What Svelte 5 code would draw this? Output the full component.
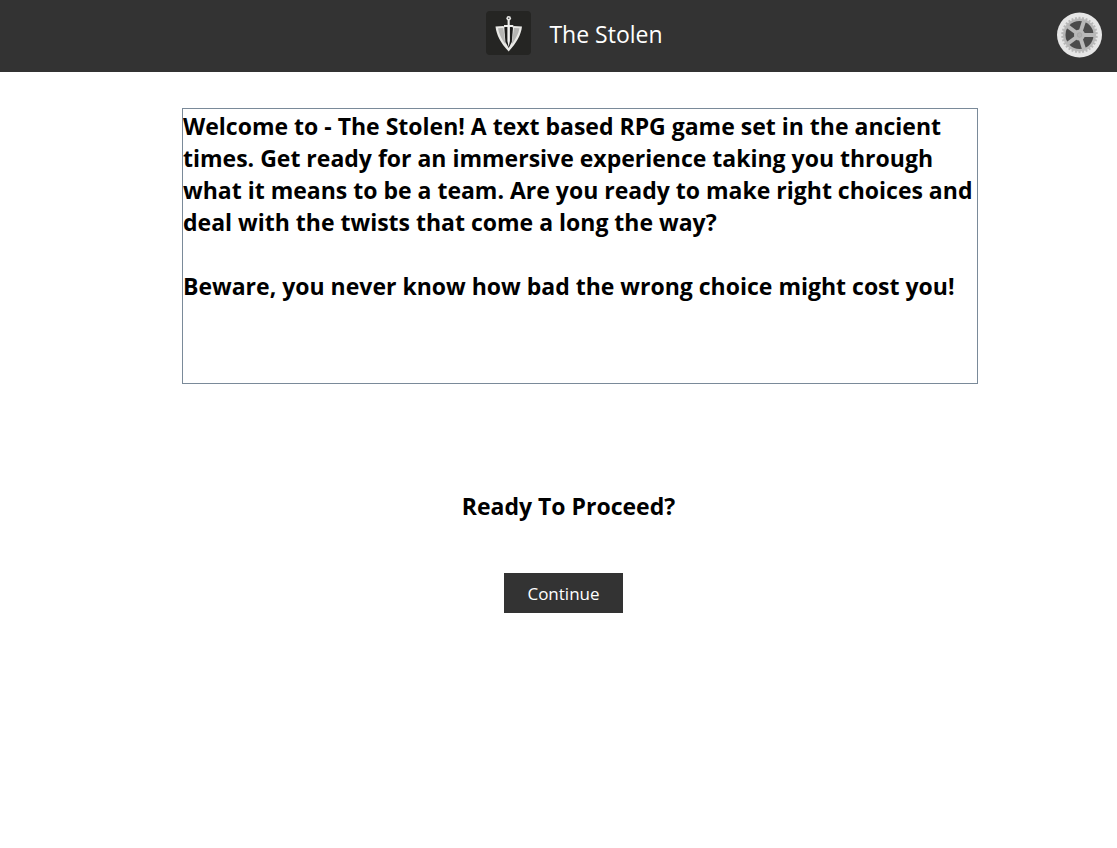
<script>
  const intro = `Welcome to - The Stolen! A text based RPG game set in the ancient times. Get ready for an immersive experience taking you through what it means to be a team. Are you ready to make right choices and deal with the twists that come a long the way?

Beware, you never know how bad the wrong choice might cost you!`;
  const teeth = Array.from({ length: 30 }, (_, i) => i * 12);
  const spokes = Array.from({ length: 5 }, (_, i) => i * 72);
</script>

<div class="page">
  <header>
    <div class="brand">
      <svg class="logo" viewBox="0 0 45 44" aria-hidden="true">
        <rect width="45" height="44" rx="4" fill="#252523" />
        <path d="M9.500 15.500L17.500 15L19 17H26L27.500 15L36 15.500C35 24 30.500 32 22.700 40.500C14.500 32 10.500 24 9.500 15.500Z" fill="#e9e9e6" />
        <path d="M12 17.300L17.300 17L19.500 33.500C15.500 28 13 23 12 17.300ZM33.500 17.300L28 17L25.700 33.500C29.500 28 32.500 23 33.500 17.300Z" fill="#b5b5b3" />
        <path d="M18.300 16.500H27L25.800 31L22.700 37L19.400 31Z" fill="#1b1b1a" />
        <path d="M21.600 9H23.700V14H27.300V16H23.900V30L22.700 36L21.400 30V16H18V14H21.600Z" fill="#f0f0ee" />
        <circle cx="22.700" cy="7.200" r="2.300" fill="#e6e6e4" />
        <circle cx="22.700" cy="7.200" r="0.800" fill="#444" />
      </svg>
      <h1>The Stolen</h1>
    </div>
    <button class="settings" type="button" aria-label="Settings">
      <svg viewBox="0 0 46 46" aria-hidden="true">
        <circle cx="22.500" cy="23" r="22.500" fill="#e6e6e6" />
        <circle cx="22.500" cy="23" r="16.500" fill="#b8b8b8" />
        {#each teeth as angle}
          <rect x="21.500" y="4.800" width="2" height="3" fill="#b8b8b8" transform="rotate({angle} 22.5 23)" />
        {/each}
        <circle cx="22.500" cy="23" r="14" fill="#4b4b4b" />
        {#each spokes as angle}
          <path d="M22.500 21H37V25H22.500Z" fill="#b8b8b8" transform="rotate({angle} 22.5 23)" />
        {/each}
        <circle cx="22.500" cy="23" r="5.500" fill="#b8b8b8" />
        <circle cx="22.500" cy="23" r="2.300" fill="#b0b0b0" stroke="#a2a2a2" stroke-width="0.800" />
      </svg>
    </button>
  </header>

  <main>
    <textarea readonly aria-label="Introduction" rows="8" value={intro}></textarea>
    <h2>Ready To Proceed?</h2>
    <div class="actions">
      <button class="continue" type="button">Continue</button>
    </div>
  </main>
</div>

<style>
  :global(body) {
    background: #fff;
  }

  .page {
    font-family: "Segoe UI", "Open Sans", "Noto Sans", sans-serif;
    color: #000;
  }

  header {
    display: grid;
    grid-template-columns: 1fr auto 1fr;
    align-items: center;
    min-height: 72px;
    padding: 0 14px 0 46px;
    box-sizing: border-box;
    background: #333;
    color: #fff;
  }

  .brand {
    grid-column: 2;
    display: flex;
    align-items: center;
    gap: 18px;
    padding-bottom: 6px;
  }

  .logo {
    width: 45px;
    height: 44px;
  }

  h1 {
    margin: 0;
    padding-top: 2px;
    font-size: 23px;
    line-height: 32px;
    font-weight: 400;
  }

  .settings {
    justify-self: end;
    display: flex;
    padding: 0 0 2px;
    border: 0;
    background: none;
    cursor: pointer;
  }

  .settings svg {
    width: 46px;
    height: 46px;
  }

  main {
    display: flex;
    flex-direction: column;
    padding-top: 36px;
  }

  textarea {
    margin: 0 139px 0 182px;
    padding: 1px 0 17px;
    border: 1px solid #7a8a99;
    border-radius: 0;
    outline: none;
    resize: none;
    overflow: hidden;
    background: #fff;
    color: inherit;
    font: 700 23px/32px "Segoe UI", "Open Sans", "Noto Sans", sans-serif;
  }

  h2 {
    margin: 106px 0 0;
    padding-left: 20px;
    text-align: center;
    font-size: 23px;
    line-height: 32px;
    font-weight: 700;
  }

  .actions {
    display: flex;
    justify-content: center;
    margin-top: 51px;
    padding-left: 10px;
  }

  .continue {
    padding: 9px 23px 7px;
    border: 0;
    background: #333;
    color: #fff;
    font: 400 17px/24px "Segoe UI", "Open Sans", "Noto Sans", sans-serif;
    cursor: pointer;
  }
</style>
